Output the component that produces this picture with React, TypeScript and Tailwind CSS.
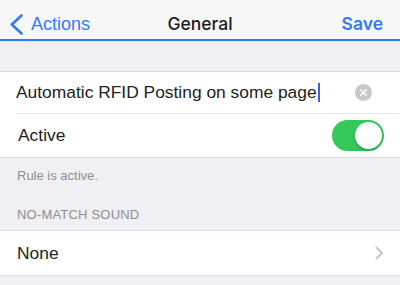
import { X } from 'lucide-react';

export default function App() {
  return (
    <div className="w-[400px] h-[285px] overflow-hidden bg-[#efeff4] font-['Liberation_Sans',Arial,sans-serif] text-[#1c1c1e]">
      {/* Navigation bar */}
      <div className="relative h-[39px] flex items-center justify-between bg-[#f7f7f8] pt-[10px]">
        <div className="flex items-center text-[#2f7cf6] pl-[10px]">
          <svg width="13" height="21" viewBox="0 0 13 21" fill="none" stroke="currentColor" strokeWidth="2.6" strokeLinecap="round" strokeLinejoin="round">
            <polyline points="11.5,1.5 1.8,10.5 11.5,19.5" />
          </svg>
          <span className="text-[18px] ml-[8px]">Actions</span>
        </div>
        <span className="absolute left-0 right-0 top-[10px] bottom-0 flex items-center justify-center text-[17.5px] font-medium pointer-events-none font-['Inter',sans-serif]">General</span>
        <span className="text-[17.5px] font-semibold text-[#2f7cf6] pr-[17px] font-['Inter',sans-serif]">Save</span>
      </div>
      <div className="h-[2px] bg-[#2f7cf6]" />
      <div className="h-[1px] bg-[#e2e2e7]" />

      <div className="h-[29px]" />

      {/* Name + Active */}
      <div className="bg-white border-y border-[#dcdce0]">
        <div className="h-[41px] flex items-center pl-[16px] pr-[28px]">
          <span className="text-[17.4px] text-[#222]">Automatic RFID Posting on some page</span>
          <span className="w-[2px] h-[19px] bg-[#3b5ef6] ml-[1px]" />
          <span className="ml-auto w-[17px] h-[17px] rounded-full bg-[#c7c7cc] flex items-center justify-center">
            <X className="w-[11px] h-[11px] text-white" strokeWidth={3} />
          </span>
        </div>
        <div className="ml-[16px] h-px bg-[#e5e5ea]" />
        <div className="h-[43px] flex items-center pl-[18px] pr-[16px]">
          <span className="text-[17.4px] text-[#222]">Active</span>
          <span className="ml-auto w-[52px] h-[31px] rounded-full bg-[#34c759] relative">
            <span className="absolute right-[2px] top-[2px] w-[27px] h-[27px] rounded-full bg-white shadow-[0_2px_3px_rgba(0,0,0,0.2)]" />
          </span>
        </div>
      </div>

      <div className="pl-[17px] pt-[10px] text-[13px] leading-[16px] text-[#8e8e93]">Rule is active.</div>
      <div className="pl-[17px] pt-[23px] pb-[7px] text-[13px] leading-[16px] text-[#8e8e93] tracking-[0.2px]">NO-MATCH SOUND</div>

      <div className="bg-white border-y border-[#dcdce0] h-[46px] flex items-center pl-[17px] pr-[16px]">
        <span className="text-[17.4px] text-[#222]">None</span>
        <svg className="ml-auto text-[#c4c4c8]" width="9" height="14" viewBox="0 0 9 14" fill="none" stroke="currentColor" strokeWidth="2" strokeLinecap="round" strokeLinejoin="round">
          <polyline points="1.5,1.5 7,7 1.5,12.5" />
        </svg>
      </div>
    </div>
  );
}
